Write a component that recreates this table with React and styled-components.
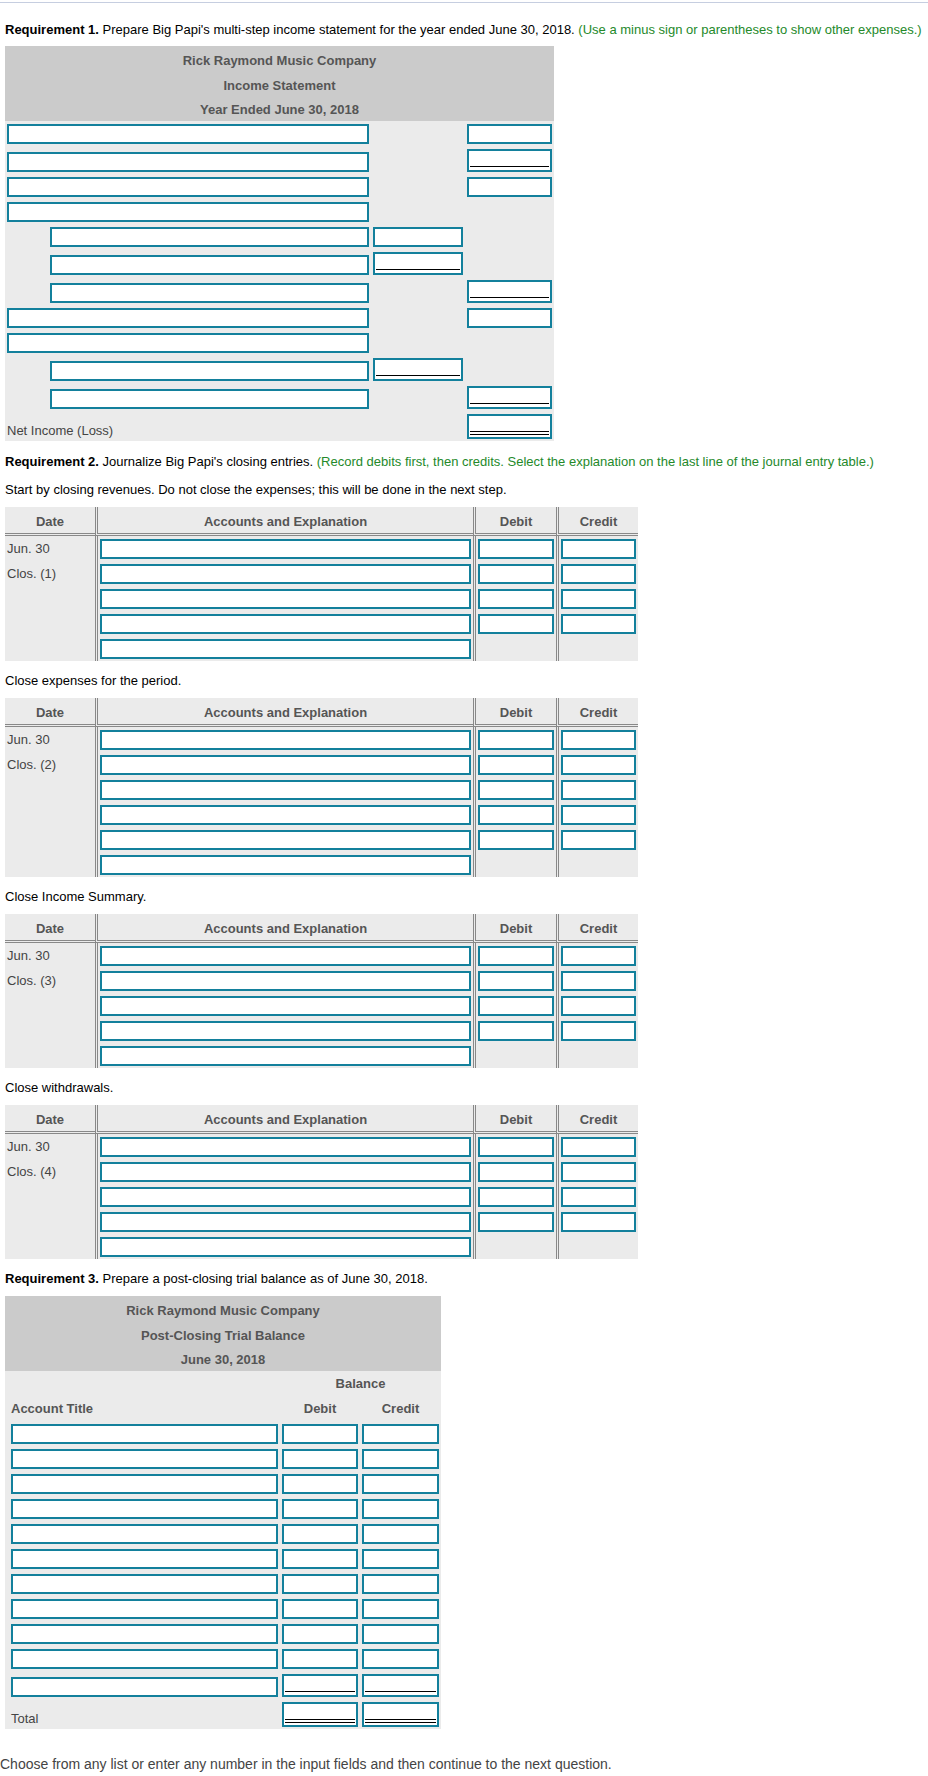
import styled, { createGlobalStyle, css } from 'styled-components';

const GlobalStyle = createGlobalStyle`
  body {
    margin: 0;
    background: #fff;
    font-family: "Liberation Sans", Arial, sans-serif;
    font-size: 13px;
    color: #000;
  }
`;

const FIELD_HEIGHT = { plain: 20, single: 23, double: 25 };

const incomeRows = [
  { right: 'plain' },
  { right: 'single' },
  { right: 'plain' },
  {},
  { indent: true, mid: 'plain' },
  { indent: true, mid: 'single' },
  { indent: true, right: 'single' },
  { right: 'plain' },
  {},
  { indent: true, mid: 'single' },
  { indent: true, right: 'single' },
  { label: 'Net Income (Loss)', right: 'double' },
];

const journals = [
  { intro: 'Close expenses for the period.', rows: 6, amountRows: 5, n: 2 },
  { intro: 'Close Income Summary.', rows: 5, amountRows: 4, n: 3 },
  { intro: 'Close withdrawals.', rows: 5, amountRows: 4, n: 4 },
];

const Field = ({ rule = 'plain' }) => <Input type="text" $rule={rule} />;

const Journal = ({ rows, amountRows, n }) => (
  <S.Journal>
    <S.JHead $first>Date</S.JHead>
    <S.JHead>Accounts and Explanation</S.JHead>
    <S.JHead>Debit</S.JHead>
    <S.JHead>Credit</S.JHead>
    {Array.from({ length: rows }).map((_, i) => [
      <S.JCell key={`d${i}`} $first>
        {i === 0 ? 'Jun. 30' : i === 1 ? `Clos. (${n})` : ''}
      </S.JCell>,
      <S.JCell key={`a${i}`}><Field /></S.JCell>,
      <S.JCell key={`db${i}`}>{i < amountRows && <Field />}</S.JCell>,
      <S.JCell key={`cr${i}`}>{i < amountRows && <Field />}</S.JCell>,
    ])}
  </S.Journal>
);

const App = () => {
  return (
    <S.Page>
      <GlobalStyle />
      <S.TopRule />
      <S.Content>
        <S.Para $mt={19}>
          <b>Requirement 1.</b> Prepare Big Papi's multi-step income statement for the year ended June 30, 2018.{' '}
          <S.Hint>(Use a minus sign or parentheses to show other expenses.)</S.Hint>
        </S.Para>

        <S.Statement $width={549}>
          <S.StatementHead>
            <div>Rick Raymond Music Company</div>
            <div>Income Statement</div>
            <div>Year Ended June 30, 2018</div>
          </S.StatementHead>
          <S.StatementBody>
            {incomeRows.map((r, i) => (
              <S.LineRow key={i} $cols="366px 94px 89px">
                {r.label ? (
                  <S.RowLabel>{r.label}</S.RowLabel>
                ) : (
                  <S.Slot $indent={r.indent ? 45 : 2}><Field /></S.Slot>
                )}
                <S.Slot>{r.mid && <Field rule={r.mid} />}</S.Slot>
                <S.Slot>{r.right && <Field rule={r.right} />}</S.Slot>
              </S.LineRow>
            ))}
          </S.StatementBody>
        </S.Statement>

        <S.Para $mt={13}>
          <b>Requirement 2.</b> Journalize Big Papi's closing entries.{' '}
          <S.Hint>(Record debits first, then credits. Select the explanation on the last line of the journal entry table.)</S.Hint>
        </S.Para>
        <S.Para $mt={12}>Start by closing revenues. Do not close the expenses; this will be done in the next step.</S.Para>
        <Journal rows={5} amountRows={4} n={1} />

        {journals.map((j) => (
          <div key={j.n}>
            <S.Para $mt={12}>{j.intro}</S.Para>
            <Journal rows={j.rows} amountRows={j.amountRows} n={j.n} />
          </div>
        ))}

        <S.Para $mt={12}>
          <b>Requirement 3.</b> Prepare a post-closing trial balance as of June 30, 2018.
        </S.Para>

        <S.Statement $width={436} $mt={9}>
          <S.StatementHead>
            <div>Rick Raymond Music Company</div>
            <div>Post-Closing Trial Balance</div>
            <div>June 30, 2018</div>
          </S.StatementHead>
          <S.StatementBody $pt={3}>
            <S.LineRow $cols="275px 80px 81px">
              <S.ColHead $span="2 / 4">Balance</S.ColHead>
            </S.LineRow>
            <S.LineRow $cols="275px 80px 81px">
              <S.ColHead $align="left" $indent={6}>Account Title</S.ColHead>
              <S.ColHead>Debit</S.ColHead>
              <S.ColHead>Credit</S.ColHead>
            </S.LineRow>
            {Array.from({ length: 11 }).map((_, i) => (
              <S.LineRow key={i} $cols="275px 80px 81px">
                <S.Slot $indent={6}><Field /></S.Slot>
                <S.Slot><Field rule={i === 10 ? 'single' : 'plain'} /></S.Slot>
                <S.Slot><Field rule={i === 10 ? 'single' : 'plain'} /></S.Slot>
              </S.LineRow>
            ))}
            <S.LineRow $cols="275px 80px 81px">
              <S.RowLabel $indent={6}>Total</S.RowLabel>
              <S.Slot><Field rule="double" /></S.Slot>
              <S.Slot><Field rule="double" /></S.Slot>
            </S.LineRow>
          </S.StatementBody>
        </S.Statement>
      </S.Content>

      <S.Footer>Choose from any list or enter any number in the input fields and then continue to the next question.</S.Footer>
    </S.Page>
  );
};

export default App;

const Input = styled.input`
  display: block;
  box-sizing: border-box;
  width: 100%;
  height: ${(p) => FIELD_HEIGHT[p.$rule]}px;
  margin: 0;
  padding: 0 3px;
  border: 2px solid #13809c;
  border-radius: 0;
  background-color: #fff;
  background-repeat: no-repeat;
  font: inherit;
  outline: none;
  ${(p) => p.$rule === 'single' && css`
    background-image: linear-gradient(#000, #000);
    background-size: calc(100% - 2px) 1px;
    background-position: 1px calc(100% - 3px);
  `}
  ${(p) => p.$rule === 'double' && css`
    background-image: linear-gradient(#000, #000), linear-gradient(#000, #000);
    background-size: calc(100% - 2px) 1px, calc(100% - 2px) 1px;
    background-position: 1px calc(100% - 5px), 1px calc(100% - 2px);
  `}
`;

const S = {
  Page: styled.div`
    width: 928px;
  `,
  TopRule: styled.div`
    height: 1px;
    margin-top: 2px;
    background: #c6cee0;
  `,
  Content: styled.div`
    padding-left: 5px;
  `,
  Para: styled.p`
    margin: ${(p) => p.$mt}px 0 0;
    line-height: 16px;
    white-space: nowrap;
    color: #000;
  `,
  Hint: styled.span`
    color: #24892a;
  `,
  Statement: styled.div`
    width: ${(p) => p.$width}px;
    margin-top: ${(p) => p.$mt ?? 8}px;
  `,
  StatementHead: styled.div`
    box-sizing: border-box;
    height: 75px;
    padding-top: 3px;
    background: #cbcbcb;
    text-align: center;
    font-weight: bold;
    line-height: 24.7px;
    color: #555;
  `,
  StatementBody: styled.div`
    display: flex;
    flex-direction: column;
    gap: 5px;
    padding: ${(p) => p.$pt ?? 3}px 0 2px;
    background: #ebebeb;
  `,
  LineRow: styled.div`
    display: grid;
    grid-template-columns: ${(p) => p.$cols};
    align-items: end;
  `,
  Slot: styled.div`
    min-width: 0;
    padding: 0 2px 0 ${(p) => p.$indent ?? 2}px;
  `,
  RowLabel: styled.div`
    padding-left: ${(p) => p.$indent ?? 2}px;
    line-height: 16px;
    color: #444;
  `,
  ColHead: styled.div`
    grid-column: ${(p) => p.$span || 'auto'};
    padding-left: ${(p) => p.$indent ?? 0}px;
    text-align: ${(p) => p.$align || 'center'};
    line-height: 20px;
    font-weight: bold;
    color: #555;
  `,
  Journal: styled.div`
    display: grid;
    grid-template-columns: 90px 378px 83px 82px;
    width: 633px;
    margin-top: 9px;
    background: #ebebeb;
  `,
  JHead: styled.div`
    box-sizing: border-box;
    height: 29px;
    padding-top: 3px;
    line-height: 23px;
    text-align: center;
    font-weight: bold;
    color: #555;
    border-bottom: 3px double #888;
    ${(p) => !p.$first && 'border-left: 3px double #888;'}
  `,
  JCell: styled.div`
    min-height: 20px;
    padding: 3px 2px 2px;
    line-height: 20px;
    color: #444;
    ${(p) => !p.$first && 'border-left: 3px double #888;'}
  `,
  Footer: styled.p`
    margin: 27px 0 0;
    line-height: 16px;
    font-size: 14px;
    color: #444;
  `,
};
